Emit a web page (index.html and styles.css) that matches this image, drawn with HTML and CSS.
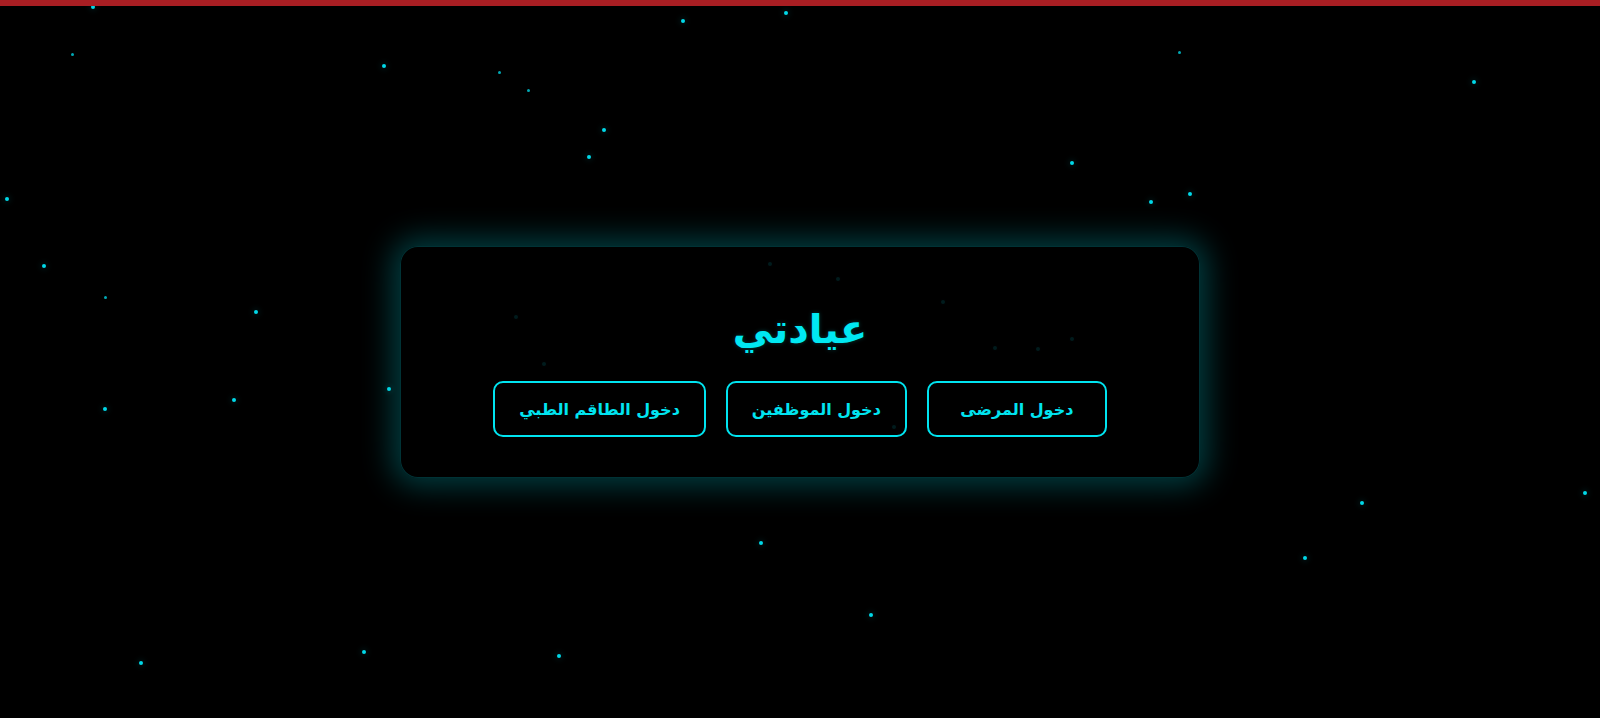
FILE: index.html
```html
<!DOCTYPE html>
<html lang="ar" dir="rtl">
<head>
<meta charset="utf-8">
<title>عيادتي</title>
<link rel="stylesheet" href="styles.css">
</head>
<body>
<div class="topbar"></div>
<div class="sky">
  <span class="star" style="left:93px;top:7px"></span>
  <span class="star sm" style="left:73px;top:55px"></span>
  <span class="star" style="left:384px;top:66px"></span>
  <span class="star sm" style="left:500px;top:73px"></span>
  <span class="star sm" style="left:529px;top:91px"></span>
  <span class="star" style="left:604px;top:130px"></span>
  <span class="star" style="left:589px;top:157px"></span>
  <span class="star" style="left:683px;top:21px"></span>
  <span class="star" style="left:786px;top:13px"></span>
  <span class="star sm" style="left:1180px;top:53px"></span>
  <span class="star" style="left:1474px;top:82px"></span>
  <span class="star" style="left:1072px;top:163px"></span>
  <span class="star" style="left:1190px;top:194px"></span>
  <span class="star" style="left:1151px;top:202px"></span>
  <span class="star" style="left:7px;top:199px"></span>
  <span class="star" style="left:44px;top:266px"></span>
  <span class="star sm" style="left:106px;top:298px"></span>
  <span class="star" style="left:256px;top:312px"></span>
  <span class="star" style="left:389px;top:389px"></span>
  <span class="star" style="left:105px;top:409px"></span>
  <span class="star" style="left:234px;top:400px"></span>
  <span class="star" style="left:1362px;top:503px"></span>
  <span class="star" style="left:1585px;top:493px"></span>
  <span class="star" style="left:1305px;top:558px"></span>
  <span class="star" style="left:761px;top:543px"></span>
  <span class="star" style="left:871px;top:615px"></span>
  <span class="star" style="left:364px;top:652px"></span>
  <span class="star" style="left:141px;top:663px"></span>
  <span class="star" style="left:559px;top:656px"></span>
  <span class="star" style="left:770px;top:264px"></span>
  <span class="star" style="left:838px;top:279px"></span>
  <span class="star" style="left:943px;top:302px"></span>
  <span class="star" style="left:516px;top:317px"></span>
  <span class="star" style="left:1072px;top:339px"></span>
  <span class="star" style="left:995px;top:348px"></span>
  <span class="star" style="left:1038px;top:349px"></span>
  <span class="star" style="left:544px;top:364px"></span>
  <span class="star" style="left:894px;top:427px"></span>
</div>
<main class="stage">
  <section class="card">
    <h1 class="title">عيادتي</h1>
    <div class="actions">
      <a class="btn" href="#">دخول المرضى</a>
      <a class="btn" href="#">دخول الموظفين</a>
      <a class="btn" href="#">دخول الطاقم الطبي</a>
    </div>
  </section>
</main>
</body>
</html>
```
FILE: styles.css
```css
* { box-sizing: border-box; }
html, body { margin: 0; padding: 0; }
body {
  background: #000;
  height: 100vh;
  overflow: hidden;
  font-family: "DejaVu Sans", "Noto Sans", sans-serif;
  display: flex;
  flex-direction: column;
}
.topbar {
  height: 6px;
  background: #a81e23;
  flex: none;
  position: relative;
  z-index: 3;
}
.sky {
  position: absolute;
  inset: 0;
  z-index: 0;
}
.star {
  position: absolute;
  width: 4px;
  height: 4px;
  margin: -2px 0 0 -2px;
  border-radius: 50%;
  background: #00d8e8;
  box-shadow: 0 0 6px rgba(0, 220, 235, 0.35);
}
.star.sm {
  width: 3px;
  height: 3px;
  background: #00a8b4;
  box-shadow: none;
}
.stage {
  flex: 1;
  display: flex;
  align-items: center;
  justify-content: center;
  position: relative;
  z-index: 1;
}
.card {
  width: 800px;
  height: 232px;
  padding: 40px 0;
  border-radius: 18px;
  background: rgba(0, 0, 0, 0.88);
  border: 1px solid rgba(0, 200, 210, 0.25);
  box-shadow: 0 0 30px 8px rgba(0, 190, 200, 0.32);
  display: flex;
  flex-direction: column;
  align-items: center;
  justify-content: space-between;
}
.title {
  margin: 0;
  padding-top: 12px;
  font-size: 40px;
  line-height: 60px;
  font-weight: 700;
  color: #00e8f2;
  text-shadow: 0 0 4px rgba(0, 230, 240, 0.25);
}
.actions {
  display: flex;
  gap: 20px;
}
.btn {
  min-width: 180px;
  height: 56px;
  padding: 0 24px;
  display: flex;
  align-items: center;
  justify-content: center;
  border: 2px solid #00e4f0;
  border-radius: 10px;
  color: #00e4f0;
  text-decoration: none;
  font-size: 16px;
  font-weight: 700;
  white-space: nowrap;
}
```
